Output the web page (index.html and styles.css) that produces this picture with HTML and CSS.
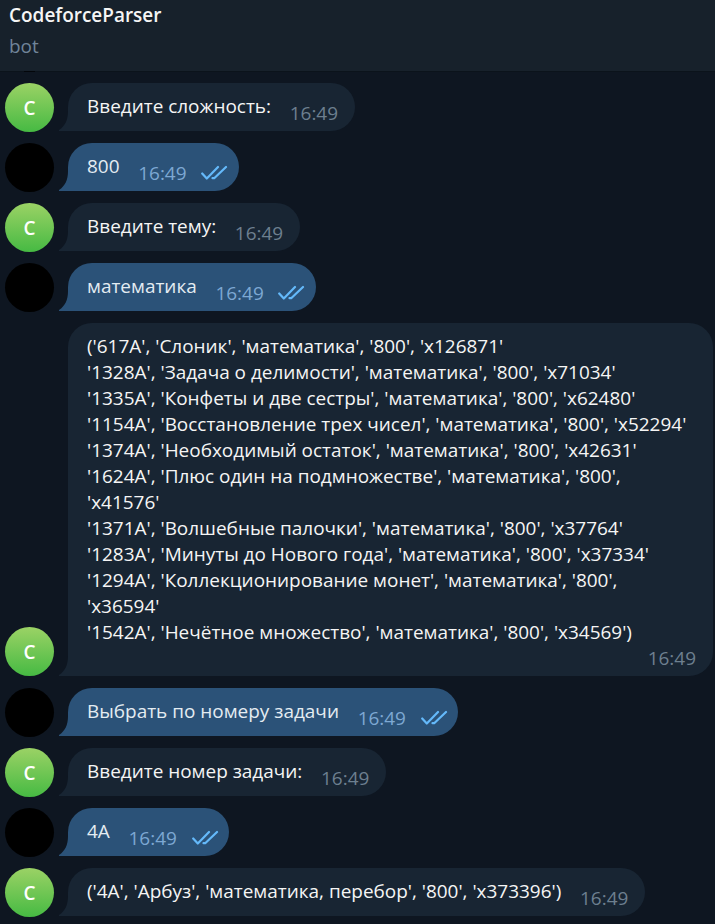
FILE: index.html
```html
<!DOCTYPE html>
<html lang="ru">
<head>
<meta charset="utf-8">
<title>CodeforceParser</title>
<link rel="stylesheet" href="styles.css">
</head>
<body>
<svg width="0" height="0" class="defs"><symbol id="ticks" viewBox="0 0 28 16"><path d="M1.2 8.5 L5.8 13.5 L17 2 M11.5 13.2 H13.2 L25 2" fill="none" stroke="#64b9fa" stroke-width="2.2" stroke-linecap="round" stroke-linejoin="round"/></symbol>
<symbol id="tail" viewBox="0 0 12 20"><path d="M12 0 H9 C9 9 6 15 0 19 V20 H12 Z"/></symbol></svg>
<header class="header"><h1 class="title">CodeforceParser</h1><div class="status">bot</div></header>
<main class="chat">
<div class="row"><div class="avatar bot">C</div><div class="bubble"><svg class="tail"><use href="#tail"/></svg><span class="text">Введите сложность:</span><span class="time">16:49</span></div></div>
<div class="row"><div class="avatar"></div><div class="bubble out"><svg class="tail"><use href="#tail"/></svg><span class="text">800</span><span class="time">16:49</span><svg class="ticks"><use href="#ticks"/></svg></div></div>
<div class="row"><div class="avatar bot">C</div><div class="bubble"><svg class="tail"><use href="#tail"/></svg><span class="text">Введите тему:</span><span class="time">16:49</span></div></div>
<div class="row"><div class="avatar"></div><div class="bubble out"><svg class="tail"><use href="#tail"/></svg><span class="text">математика</span><span class="time">16:49</span><svg class="ticks"><use href="#ticks"/></svg></div></div>
<div class="row"><div class="avatar bot raised">C</div><div class="bubble long"><svg class="tail"><use href="#tail"/></svg><div class="text">('617A', 'Слоник', 'математика', '800', 'x126871'
'1328A', 'Задача о делимости', 'математика', '800', 'x71034'
'1335A', 'Конфеты и две сестры', 'математика', '800', 'x62480'
'1154A', 'Восстановление трех чисел', 'математика', '800', 'x52294'
'1374A', 'Необходимый остаток', 'математика', '800', 'x42631'
'1624A', 'Плюс один на подмножестве', 'математика', '800',
'x41576'
'1371A', 'Волшебные палочки', 'математика', '800', 'x37764'
'1283A', 'Минуты до Нового года', 'математика', '800', 'x37334'
'1294A', 'Коллекционирование монет', 'математика', '800',
'x36594'
'1542A', 'Нечётное множество', 'математика', '800', 'x34569')</div><span class="time">16:49</span></div></div>
<div class="row"><div class="avatar"></div><div class="bubble out"><svg class="tail"><use href="#tail"/></svg><span class="text">Выбрать по номеру задачи</span><span class="time">16:49</span><svg class="ticks"><use href="#ticks"/></svg></div></div>
<div class="row"><div class="avatar bot">C</div><div class="bubble"><svg class="tail"><use href="#tail"/></svg><span class="text">Введите номер задачи:</span><span class="time">16:49</span></div></div>
<div class="row"><div class="avatar"></div><div class="bubble out"><svg class="tail"><use href="#tail"/></svg><span class="text">4A</span><span class="time">16:49</span><svg class="ticks"><use href="#ticks"/></svg></div></div>
<div class="row"><div class="avatar bot">C</div><div class="bubble"><svg class="tail"><use href="#tail"/></svg><span class="text">('4A', 'Арбуз', 'математика, перебор', '800', 'x373396')</span><span class="time">16:49</span></div></div>
</main>
</body>
</html>
```
FILE: styles.css
```css
* { box-sizing: border-box; }
body { margin: 0; height: 924px; overflow: hidden; background: #0e1621; color: #f5f5f5; font: 18.97px/26px "Open Sans", sans-serif; }
.defs { position: absolute; }
.header { position: relative; height: 72px; padding: 2px 9px; background: #17212b; border-bottom: 1px solid #0b131b; }
/* Edge of the avatar scrolled under the header */
.header::after { content: ""; position: absolute; left: 24px; bottom: -1px; width: 11px; height: 1px; background: #03060a; }
.title { margin: 0; font-size: 18.97px; font-weight: 600; line-height: 26px; }
.status { margin-top: 5px; color: #708499; line-height: 26px; }
.chat { display: flex; flex-direction: column; gap: 12px; padding: 11px 0 0 5px; }
.row { display: flex; align-items: flex-end; gap: 14px; }
.avatar { width: 49px; height: 49px; margin-bottom: -1px; border-radius: 50%; background: #000; flex: none; color: #fff; text-align: center; line-height: 50px; font-weight: 600; }
.bot { background: linear-gradient(#9bd265, #46ba43); }
.raised { margin-bottom: 0; }
.bubble { position: relative; display: flex; height: 48px; padding: 10px 16.8px 0 19px; border-radius: 24px 24px 24px 0; background: #182533; white-space: pre; color: #182533; }
.out { background: #2b5278; color: #2b5278; }
.text { color: #f5f5f5; }
.out .text { color: #e4ecf2; }
.time { margin: 7px 0 0 18.7px; color: #6d7f8f; }
.out .time { color: #7da8d3; }
.tail { position: absolute; left: -9px; bottom: 0; width: 12px; height: 20px; fill: currentColor; }
.ticks { width: 28px; height: 16px; margin: 12px -7px 0 14.7px; }
.long { display: block; width: 645px; height: 353px; padding-right: 17px; }
.long .time { display: block; margin: 0; text-align: right; }
```
